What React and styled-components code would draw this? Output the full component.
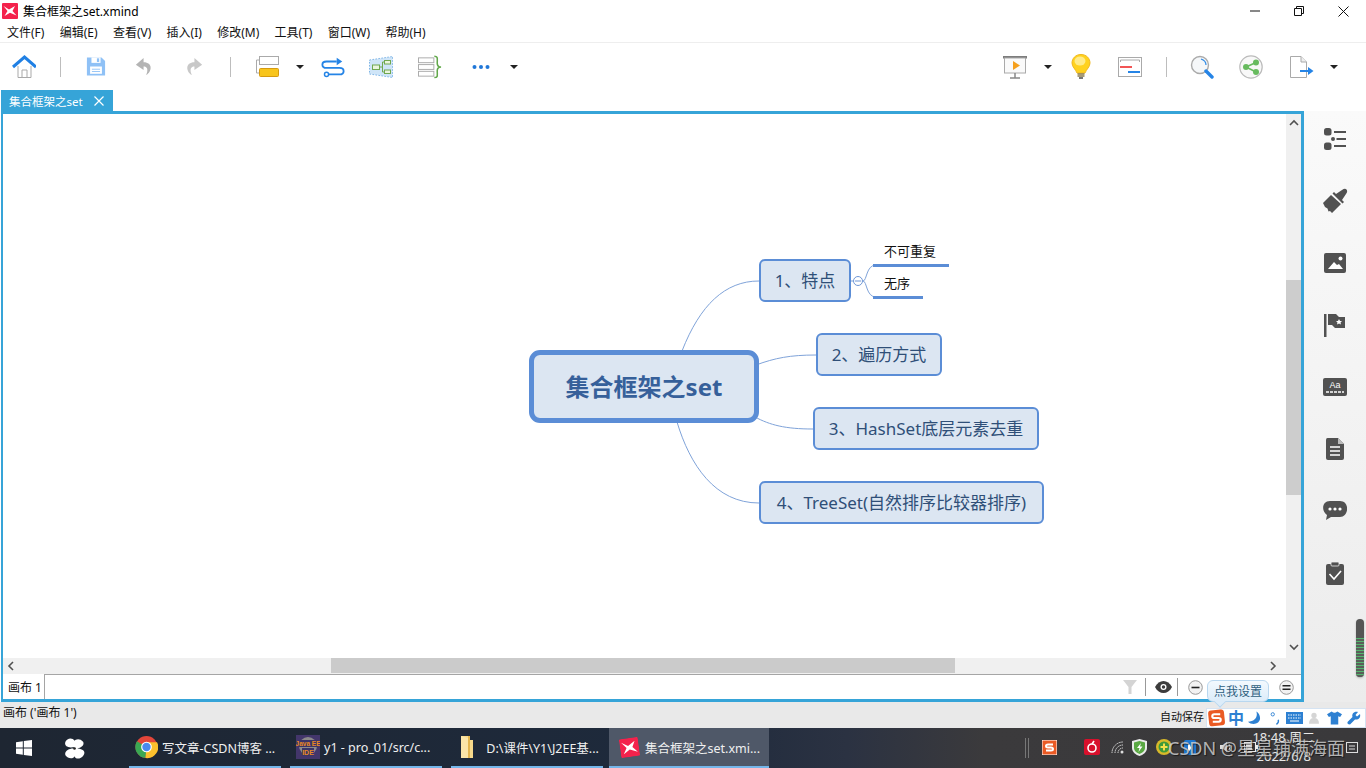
import React from 'react';
import styled, { createGlobalStyle } from 'styled-components';

const GlobalStyle = createGlobalStyle`
  html, body { margin: 0; padding: 0; background: #fff; }
  body { font-family: "Noto Sans", "Noto Sans CJK SC", sans-serif; }
  * { box-sizing: border-box; }
`;

const cjk = `"Noto Sans", "Noto Sans CJK SC", sans-serif`;

const Page = styled.div`
  position: relative;
  width: 1366px;
  height: 768px;
  overflow: hidden;
  display: flex;
  flex-direction: column;
  font-family: ${cjk};
`;

const TitleBar = styled.div`
  height: 22px;
  flex: none;
  display: flex;
  align-items: center;
  padding-left: 2px;
  color: #000;
  font-size: 12px;
`;

const TitleText = styled.span`
  margin-left: 5px;
  flex: 1;
`;

const WinButtons = styled.div`
  display: flex;
  align-items: center;
  gap: 34px;
  padding-right: 17px;
  height: 22px;
`;

const MenuBar = styled.div`
  height: 21px;
  flex: none;
  display: flex;
  align-items: center;
  gap: 15.3px;
  padding-left: 7px;
  font-size: 12px;
  color: #111;
  border-bottom: 1px solid #eee;
`;

const Toolbar = styled.div`
  height: 47px;
  flex: none;
  display: flex;
  align-items: center;
  padding-left: 12px;
`;

const Tool = styled.span`
  display: flex;
  align-items: center;
  flex: none;
  margin-left: ${p => p.$ml || 0}px;
`;

const Sep = styled.span`
  flex: none;
  width: 1px;
  height: 20px;
  background: #bdbdbd;
  margin-left: ${p => p.$ml || 0}px;
`;

const Caret = styled.span`
  flex: none;
  width: 0;
  height: 0;
  border-left: 4px solid transparent;
  border-right: 4px solid transparent;
  border-top: 4px solid #222;
  margin-left: ${p => p.$ml || 0}px;
`;

const Spacer = styled.span`
  flex: 1;
`;

const Main = styled.div`
  height: 612px;
  flex: none;
  display: flex;
`;

const LeftColumn = styled.div`
  width: 1304px;
  display: flex;
  flex-direction: column;
  padding-left: 1px;
`;

const TabRow = styled.div`
  height: 21px;
  flex: none;
  display: flex;
`;

const Tab = styled.div`
  width: 112px;
  background: #36a4d8;
  color: #fff;
  font-size: 11.5px;
  display: flex;
  align-items: center;
  justify-content: space-between;
  padding: 0 9px 0 8px;
`;

const Frame = styled.div`
  flex: 1;
  border: 3px solid #36a4d8;
  border-left-width: 2px;
  display: flex;
  flex-direction: column;
  min-height: 0;
`;

const FrameTop = styled.div`
  height: 544px;
  flex: none;
  display: flex;
`;

const Canvas = styled.div`
  position: relative;
  flex: 1;
  background: #fff;
`;

const Lines = styled.svg`
  position: absolute;
  left: 0;
  top: 0;
`;

const Node = styled.div`
  position: absolute;
  left: ${p => p.$x}px;
  top: ${p => p.$y}px;
  width: ${p => p.$w}px;
  height: 43px;
  background: #dce6f2;
  border: 2px solid #5b8dd6;
  border-radius: 6px;
  color: #2f4f78;
  font-size: 17px;
  display: flex;
  align-items: center;
  justify-content: center;
  white-space: nowrap;
  padding-bottom: 2px;
`;

const CenterNode = styled(Node)`
  height: 73px;
  border-width: 5px;
  border-radius: 11px;
  color: #36609a;
  font-size: 24px;
  font-weight: 700;
`;

const SubNode = styled.div`
  position: absolute;
  left: ${p => p.$x}px;
  top: ${p => p.$y}px;
  width: ${p => p.$w}px;
  height: 25px;
  border-bottom: 3px solid #5b8dd6;
  color: #111;
  font-size: 13px;
  line-height: 18px;
  padding-left: 11px;
  white-space: nowrap;
`;

const VScroll = styled.div`
  width: 15px;
  background: #f0f0f0;
  display: flex;
  flex-direction: column;
  align-items: center;
  justify-content: space-between;
  padding: 5px 0;
  position: relative;
`;

const VThumb = styled.div`
  position: absolute;
  left: 0;
  top: 166px;
  width: 100%;
  height: 215px;
  background: #cdcdcd;
`;

const HScroll = styled.div`
  height: 16px;
  flex: none;
  background: #f0f0f0;
  display: flex;
  align-items: center;
  justify-content: space-between;
  padding: 0 22px 0 4px;
  position: relative;
`;

const HThumb = styled.div`
  position: absolute;
  left: 328px;
  top: 0;
  width: 624px;
  height: 15px;
  background: #cbcbcb;
`;

const SheetBar = styled.div`
  flex: 1;
  display: flex;
  align-items: stretch;
  background: #fff;
`;

const SheetTab = styled.div`
  width: 42px;
  padding-left: 5px;
  font-size: 12px;
  color: #111;
  display: flex;
  align-items: center;
  border-right: 1px solid #a5a5a5;
  white-space: nowrap;
`;

const SheetTools = styled.div`
  flex: 1;
  border-top: 1px solid #a5a5a5;
  display: flex;
  align-items: center;
  justify-content: flex-end;
  padding-right: 7px;
`;

const BarSep = styled.span`
  width: 1px;
  height: 18px;
  background: #999;
  margin-left: ${p => p.$ml || 0}px;
`;

const Sidebar = styled.div`
  width: 62px;
  background: linear-gradient(#fafafa, #ececec);
  position: relative;
  display: flex;
  flex-direction: column;
  align-items: center;
  padding-top: 15px;
  gap: 36px;
  margin-top: 21px;
`;

const SideIcon = styled.span`
  display: flex;
  width: 26px;
  height: 26px;
  align-items: center;
  justify-content: center;
`;

const Level = styled.div`
  position: absolute;
  right: 2px;
  top: 508px;
  width: 8px;
  height: 58px;
  border-radius: 4px;
  background: #555;
  box-shadow: 0 1px 2px rgba(0, 0, 0, .25);
  overflow: hidden;
  display: flex;
  align-items: flex-end;
`;

const LevelFill = styled.div`
  width: 100%;
  height: 39px;
  background: repeating-linear-gradient(#55b56f 0, #55b56f 1px, #5a5f5a 1px, #5a5f5a 3px);
`;

const StatusBar = styled.div`
  height: 26px;
  flex: none;
  background: #e9e9e9;
  display: flex;
  align-items: center;
  padding-left: 3px;
  font-size: 12px;
  color: #111;
`;

const StatusLeft = styled.span`
  flex: 1;
  padding-bottom: 6px;
`;

const AutoSave = styled.span`
  padding-top: 2px;
  margin-right: 2px;
  font-size: 11px;
`;

const ImeBar = styled.div`
  width: 160px;
  height: 20px;
  margin-top: 6px;
  background: #fff;
  border: 1px solid #d5e3f2;
  display: flex;
  align-items: center;
  color: #2d80d2;
`;

const ImeGlyph = styled.span`
  flex: none;
  display: flex;
  margin-left: ${p => p.$ml || 0}px;
`;

const ImeZh = styled(ImeGlyph)`
  font-size: 16px;
  font-weight: 700;
  color: #2d80d2;
  line-height: 1;
`;

const Bubble = styled.div`
  position: absolute;
  left: 1207px;
  top: 680px;
  width: 62px;
  height: 22px;
  border: 1px solid #b9d7ef;
  border-radius: 6px;
  background: linear-gradient(#f3f9fe, #dcecf9);
  color: #2f5f80;
  font-size: 12px;
  display: flex;
  align-items: center;
  justify-content: center;
  &:after {
    content: "";
    position: absolute;
    left: 7px;
    bottom: -6px;
    width: 9px;
    height: 9px;
    background: #dcecf9;
    border-right: 1px solid #b9d7ef;
    border-bottom: 1px solid #b9d7ef;
    transform: rotate(45deg) scale(.8);
  }
`;

const Taskbar = styled.div`
  height: 40px;
  flex: none;
  background: linear-gradient(90deg, #1e2632 0%, #1e2a3c 50%, #2b3242 62%, #3b3a3c 72%, #3a393b 100%);
  display: flex;
  align-items: center;
  color: #fff;
`;

const StartArea = styled.div`
  width: 129px;
  flex: none;
  display: flex;
  align-items: center;
  padding-left: 16px;
`;

const TaskItem = styled.div`
  width: ${p => (p.$active ? 160 : 152)}px;
  height: 40px;
  flex: none;
  margin-right: ${p => (p.$active ? 0 : 9)}px;
  margin-left: ${p => (p.$active ? -3 : 0)}px;
  display: flex;
  align-items: center;
  gap: ${p => (p.$active ? 6 : 4)}px;
  padding-left: ${p => (p.$active ? 11 : 6)}px;
  font-size: 12.5px;
  color: #f0f0f0;
  white-space: nowrap;
  background: ${p => (p.$active ? '#4f5868' : 'transparent')};
  border-bottom: 2px solid #74b6ea;
`;

const Tray = styled.div`
  flex: 1;
  display: flex;
  align-items: center;
  height: 40px;
  position: relative;
`;

const TrayIcon = styled.span`
  flex: none;
  display: flex;
  margin-left: ${p => p.$ml || 0}px;
  margin-bottom: 2px;
`;

const TraySep = styled.span`
  flex: none;
  width: 4px;
  height: 20px;
  border-left: 1px solid #777;
  border-right: 1px solid #777;
  margin-left: ${p => p.$ml || 0}px;
`;

const Clock = styled.div`
  position: absolute;
  right: 51px;
  top: 0;
  text-align: center;
  font-size: 13px;
  line-height: 19px;
  color: #e8e8e8;
  white-space: nowrap;
`;

const Watermark = styled.div`
  position: absolute;
  left: 1168px;
  top: 735px;
  font-size: 18px;
  line-height: 26px;
  color: rgba(210, 210, 210, .82);
  text-shadow: 1px 1px 1px rgba(0, 0, 0, .55);
  white-space: nowrap;
`;

const XLogo = ({ size = 16, tilt = 0 }) => (
  <svg width={size} height={size} viewBox="0 0 16 16" style={{ transform: `rotate(${tilt}deg)` }}>
    <rect width="16" height="16" rx="1" fill="#f4224c" />
    <path d="M1.5 3 L7 6.5 L13 3 L10.5 8 L14.5 12.5 L8 9.8 L2.5 13 L5.5 8 Z" fill="#fff" />
  </svg>
);

const Home = () => (
  <svg width="24" height="24" viewBox="0 0 24 24">
    <path d="M6 11 V22.5 H19 V11" fill="#fff" stroke="#a9a9a9" />
    <path d="M10 22 V15 H15 V22" fill="none" stroke="#a9a9a9" />
    <path d="M1 12 L12.5 2 L24 12" fill="none" stroke="#2080e4" strokeWidth="3" />
  </svg>
);

const Save = () => (
  <svg width="20" height="21" viewBox="0 0 22 22">
    <path d="M1 1 H17 L21 5 V21 H1 Z" fill="#8fc1f6" />
    <rect x="6" y="1" width="10" height="6" fill="#fff" />
    <rect x="12" y="2" width="2.5" height="4" fill="#8fc1f6" />
    <rect x="4.5" y="11" width="13" height="8" fill="#fff" />
    <path d="M6.5 14 H15.5 M6.5 16.5 H15.5" stroke="#8fc1f6" />
  </svg>
);

const Undo = ({ flip, fill }) => (
  <svg width="18" height="21" viewBox="0 0 21 22" style={{ transform: flip ? 'scaleX(-1)' : 'none' }}>
    <path d="M10 1 L1 9 L10 15 V11 C14 11 16 14 13 21 C20 17 21 6 10 6 Z" fill={fill} />
  </svg>
);

const Topic = () => (
  <svg width="23" height="21" viewBox="0 0 23 21">
    <rect x="3.5" y=".5" width="19" height="8" fill="#fff" stroke="#aaa" />
    <path d="M3.5 4 H.5 V17 H3.5" fill="none" stroke="#aaa" />
    <rect x="3.5" y="12.5" width="19" height="8" rx="1" fill="#f8c51c" stroke="#d69a10" />
  </svg>
);

const Relation = () => (
  <svg width="24" height="22" viewBox="0 0 26 22">
    <path d="M17 5 H6 C0 5 0 12 6 12 H20 C26 12 26 19 20 19 H8" fill="none" stroke="#2584e6" strokeWidth="2" />
    <path d="M17 1 L23 5 L17 9 Z" fill="#2584e6" />
    <circle cx="6" cy="19" r="2.2" fill="#fff" stroke="#2584e6" strokeWidth="1.6" />
  </svg>
);

const Boundary = () => (
  <svg width="26" height="22" viewBox="0 0 25 22">
    <path d="M1 4 L24 .5 V21.5 L1 18 Z" fill="#cfe5f8" stroke="#7db4e6" strokeDasharray="1.5 1.5" />
    <rect x="4" y="9" width="7" height="4.5" fill="#eaf5de" stroke="#71a84f" />
    <rect x="16" y="4.5" width="6" height="3.5" fill="#eaf5de" stroke="#71a84f" />
    <rect x="16" y="14" width="6" height="3.5" fill="#eaf5de" stroke="#71a84f" />
    <path d="M11 11 H14 M14 6 V16 M14 6 H16 M14 16 H16" stroke="#71a84f" fill="none" />
  </svg>
);

const Summary = () => (
  <svg width="25" height="24" viewBox="0 0 26 24">
    <rect x=".5" y="2.5" width="16" height="5" fill="#fff" stroke="#aaa" />
    <rect x=".5" y="9.5" width="16" height="5" fill="#fff" stroke="#aaa" />
    <rect x=".5" y="16.5" width="16" height="5" fill="#fff" stroke="#aaa" />
    <path d="M17 .8 C21 .8 20 3 20 8 C20 11 21 12 24 12 C21 12 20 13 20 16 C20 21 21 23 17 23" fill="none" stroke="#62a84a" strokeWidth="1.6" />
  </svg>
);

const More = () => (
  <svg width="18" height="6" viewBox="0 0 18 6">
    <circle cx="2.5" cy="3" r="2" fill="#2077d8" />
    <circle cx="9" cy="3" r="2" fill="#2077d8" />
    <circle cx="15.5" cy="3" r="2" fill="#2077d8" />
  </svg>
);

const Present = () => (
  <svg width="25" height="24" viewBox="0 0 25 24">
    <rect x="0" y="1" width="24" height="2.5" fill="#7d7d7d" />
    <rect x="1.5" y="3" width="21" height="15" fill="#fafafa" stroke="#aaa" />
    <path d="M10 6 L17 10.5 L10 15 Z" fill="#f5a01e" />
    <path d="M12 18 V23 M7 23 H17" stroke="#888" strokeWidth="1.5" />
  </svg>
);

const Bulb = () => (
  <svg width="20" height="25" viewBox="0 0 20 25">
    <path d="M10 .5 C4.5 .5 1 4.5 1 9 C1 13 4.5 15 6 19 H14 C15.5 15 19 13 19 9 C19 4.5 15.5 .5 10 .5 Z" fill="#ffd21f" stroke="#f0b820" />
    <ellipse cx="9" cy="7" rx="5.5" ry="4.5" fill="#ffeb8a" />
    <path d="M6.5 20 H13.5 M6.5 22 H13.5" stroke="#8a7b4c" strokeWidth="1.6" />
    <path d="M8 24 H12" stroke="#555" strokeWidth="1.6" />
  </svg>
);

const Gantt = () => (
  <svg width="24" height="20" viewBox="0 0 24 20">
    <rect x=".5" y=".5" width="23" height="19" fill="#fff" stroke="#aaa" />
    <path d="M2.5 5 V3 H21.5 V5" fill="none" stroke="#aaa" />
    <rect x="2" y="9" width="12" height="2" fill="#f25555" />
    <rect x="10" y="14" width="12" height="2" fill="#2584e6" />
  </svg>
);

const Search = () => (
  <svg width="24" height="24" viewBox="0 0 24 24">
    <circle cx="10" cy="10" r="8.5" fill="#f5f7f9" stroke="#aaa" strokeWidth="1.4" />
    <path d="M11 4 C14 5 16 7 16 10" fill="none" stroke="#2e8ae6" strokeWidth="1.2" />
    <path d="M16 16 L22 22" stroke="#2584e6" strokeWidth="3.4" strokeLinecap="round" />
  </svg>
);

const Share = () => (
  <svg width="24" height="24" viewBox="0 0 24 24">
    <circle cx="12" cy="12" r="11.2" fill="#f8f8f8" stroke="#bbb" strokeWidth="1.2" />
    <path d="M17 7.5 L7 12 L17 17" fill="none" stroke="#68bb5f" strokeWidth="1.6" />
    <circle cx="17" cy="7.5" r="3" fill="#68bb5f" />
    <circle cx="7" cy="12" r="3" fill="#68bb5f" />
    <circle cx="17" cy="17" r="3" fill="#68bb5f" />
  </svg>
);

const ExportFile = () => (
  <svg width="24" height="22" viewBox="0 0 24 22">
    <path d="M.5 .5 H11 L16.5 6 V21.5 H.5 Z" fill="#fff" stroke="#aaa" />
    <path d="M11 .5 V6 H16.5" fill="#eee" stroke="#aaa" />
    <path d="M10 15 H19" stroke="#2584e6" strokeWidth="2" />
    <path d="M18 11 L23.5 15 L18 19 Z" fill="#2584e6" />
  </svg>
);

const Chevron = ({ dir }) => {
  const d = { up: 'M1 6 L5 2 L9 6', down: 'M1 2 L5 6 L9 2', left: 'M6 1 L2 5 L6 9', right: 'M2 1 L6 5 L2 9' }[dir];
  return (
    <svg width="10" height="10" viewBox="0 0 10 10" style={{ position: 'relative', zIndex: 1 }}>
      <path d={d} fill="none" stroke="#505050" strokeWidth="1.6" />
    </svg>
  );
};

const s = '#515151';
const sideIcons = [
  <svg key="a" width="22" height="22" viewBox="0 0 22 22">
    <rect width="7.5" height="7.5" rx="2.5" fill={s} /><circle cx="9" cy="11" r="2" fill={s} /><rect y="14.5" width="7.5" height="7.5" rx="2.5" fill={s} />
    <path d="M10 4 H22 M12.5 11 H22 M10 18 H22" stroke={s} strokeWidth="2" />
  </svg>,
  <svg key="b" width="26" height="26" viewBox="0 0 26 26">
    <path d="M1 15 L9 7 L19 16 L10 25 L8 23 L6.5 23.5 L5.5 20.5 L3 19 Z" fill={s} />
    <path d="M10.5 5.5 L12 4 L14 6 L20 2 Q23 0 24.5 1.5 Q26 3.5 24 6 L20 12 L22 14 L20.5 15.5 Z" fill={s} />
  </svg>,
  <svg key="c" width="22" height="20" viewBox="0 0 22 20">
    <rect width="22" height="20" rx="2" fill={s} />
    <path d="M4 16 L10 9 L13 12 L15 11 L19 16 Z" fill="#fff" /><circle cx="16.5" cy="5.5" r="2" fill="#fff" />
  </svg>,
  <svg key="d" width="22" height="23" viewBox="0 0 22 23">
    <rect x="0" y="0" width="2.5" height="23" fill={s} />
    <path d="M4 0 H12 L15 3 H21 V14 H11 L8 11 H4 Z" fill={s} />
    <path d="M15 5 L16 7 L18 7 L16.5 8.5 L17 10.5 L15 9.5 L13 10.5 L13.5 8.5 L12 7 L14 7 Z" fill="#fff" />
  </svg>,
  <svg key="e" width="24" height="18" viewBox="0 0 24 18">
    <rect width="24" height="18" rx="2" fill={s} />
    <text x="12" y="10" textAnchor="middle" fontSize="9" fontFamily="Liberation Sans" fill="#fff">Aa</text>
    <path d="M3 14 H21" stroke="#fff" strokeWidth="1.4" strokeDasharray="3 1" />
  </svg>,
  <svg key="f" width="18" height="22" viewBox="0 0 18 22">
    <path d="M1.5 0 H12 L18 6 V20 Q18 22 16 22 H2 Q0 22 0 20 V2 Q0 0 1.5 0 Z" fill={s} />
    <path d="M12 0 L18 6 H12 Z" fill="#bbb" />
    <path d="M4 9 H14 M4 13 H14 M4 17 H14" stroke="#fff" strokeWidth="1.3" />
  </svg>,
  <svg key="g" width="24" height="20" viewBox="0 0 24 20">
    <path d="M7 0 H17 C27 0 26 16 17 16 H8 L3 19 L4 14 C-2 10 -1 0 7 0 Z" fill={s} />
    <circle cx="7" cy="8" r="1.6" fill="#fff" /><circle cx="12" cy="8" r="1.6" fill="#fff" /><circle cx="17" cy="8" r="1.6" fill="#fff" />
  </svg>,
  <svg key="h" width="18" height="23" viewBox="0 0 18 23">
    <rect y="2" width="18" height="21" rx="2" fill={s} />
    <rect x="5" y="0" width="8" height="4" rx="1" fill={s} stroke="#eee" strokeWidth=".8" />
    <path d="M3.5 12 L8 17 L15 9" fill="none" stroke="#fff" strokeWidth="1.6" />
  </svg>,
];

const WinLogo = () => (
  <svg width="16" height="16" viewBox="0 0 16 16">
    <path d="M0 2.2 L6.8 1.2 V7.5 H0 Z M7.8 1 L16 0 V7.5 H7.8 Z M0 8.5 H6.8 V14.8 L0 13.8 Z M7.8 8.5 H16 V16 L7.8 15 Z" fill="#fff" />
  </svg>
);

const Pinwheel = () => (
  <svg width="21" height="21" viewBox="0 0 22 22" style={{ marginLeft: 32 }}>
    <path d="M11 9.5 C3 11 0 8 1.5 4 C3 0 9 -1 11 3 C12 1 17 0 20 4 C22 8 17 11 12.5 11 C20 11 23 14 20.5 18 C18 22 12 23 11 19 C10 22 4 22 1.5 18 C0 14 5 11 9.5 11 Z" fill="#fff" />
    <circle cx="11" cy="11" r="1.4" fill="#222" />
  </svg>
);

const Chrome = () => (
  <svg width="23" height="24" viewBox="0 0 24 24">
    <circle cx="12" cy="12" r="11.5" fill="#e3463a" />
    <path d="M12 12 L2 6 A11.5 11.5 0 0 0 11 23.5 Z" fill="#3aa853" />
    <path d="M12 7 H23 A11.5 11.5 0 0 1 11 23.5 L12 12 Z" fill="#fbc02d" />
    <circle cx="12" cy="12" r="5.6" fill="#fff" />
    <circle cx="12" cy="12" r="4.4" fill="#4a8af0" />
  </svg>
);

const EclipseIcon = () => (
  <svg width="24" height="24" viewBox="0 0 24 24">
    <rect width="24" height="24" fill="#43366b" />
    <circle cx="12" cy="11" r="9" fill="#8c8a8a" />
    <rect x="2" y="5" width="20" height="7" fill="#3b3468" />
    <rect x="6" y="13" width="12" height="8" fill="#3b3468" />
    <text x="12" y="11" textAnchor="middle" fontSize="6.5" fontWeight="700" fontFamily="Liberation Sans" fill="#e98a22">Java EE</text>
    <text x="12" y="20" textAnchor="middle" fontSize="7" fontWeight="700" fontFamily="Liberation Sans" fill="#e98a22">IDE</text>
  </svg>
);

const Folder = () => (
  <svg width="16" height="24" viewBox="0 0 16 24" style={{ marginLeft: 2, marginRight: 4 }}>
    <path d="M2 1 H11 V5 H14 V23 H2 Z" fill="#f7d98b" />
    <path d="M9 1 H11 V23 H9 Z" fill="#e4b64f" />
    <path d="M2 1 L9 3 V23 H2 Z" fill="#fbe5a8" />
  </svg>
);

const SogouS = ({ size = 15 }) => (
  <svg width={size} height={size} viewBox="0 0 15 15">
    <rect width="15" height="15" fill="#ea5a24" stroke="#fff" />
    <path d="M11 4.5 H6 Q4 4.5 4 6 T6 7.5 H9 Q11 7.5 11 9 T9 10.5 H4" fill="none" stroke="#fff" strokeWidth="2" />
  </svg>
);

const App = () => (
  <Page>
    <GlobalStyle />
    <TitleBar>
      <XLogo />
      <TitleText>集合框架之set.xmind</TitleText>
      <WinButtons>
        <svg width="10" height="10" viewBox="0 0 10 10"><path d="M0 5 H10" stroke="#111" /></svg>
        <svg width="10" height="10" viewBox="0 0 10 10"><path d="M.5 2.5 H7.5 V9.5 H.5 Z M2.5 2.5 V.5 H9.5 V7.5 H7.5" fill="none" stroke="#111" /></svg>
        <svg width="11" height="11" viewBox="0 0 11 11"><path d="M.5 .5 L10.5 10.5 M10.5 .5 L.5 10.5" stroke="#111" /></svg>
      </WinButtons>
    </TitleBar>
    <MenuBar>
      {['文件(F)', '编辑(E)', '查看(V)', '插入(I)', '修改(M)', '工具(T)', '窗口(W)', '帮助(H)'].map(m => (
        <span key={m}>{m}</span>
      ))}
    </MenuBar>
    <Toolbar>
      <Tool><Home /></Tool>
      <Sep $ml={24} />
      <Tool $ml={25}><Save /></Tool>
      <Tool $ml={29}><Undo fill="#b4b4b4" /></Tool>
      <Tool $ml={32}><Undo flip fill="#c8c8c8" /></Tool>
      <Sep $ml={27} />
      <Tool $ml={25}><Topic /></Tool>
      <Caret $ml={17} />
      <Tool $ml={17}><Relation /></Tool>
      <Tool $ml={23}><Boundary /></Tool>
      <Tool $ml={24}><Summary /></Tool>
      <Tool $ml={29}><More /></Tool>
      <Caret $ml={20} />
      <Spacer />
      <Tool><Present /></Tool>
      <Caret $ml={16} />
      <Tool $ml={19}><Bulb /></Tool>
      <Tool $ml={27}><Gantt /></Tool>
      <Sep $ml={24} />
      <Tool $ml={23}><Search /></Tool>
      <Tool $ml={25}><Share /></Tool>
      <Tool $ml={27}><ExportFile /></Tool>
      <Caret $ml={16} />
      <Tool $ml={28} />
    </Toolbar>
    <Main>
      <LeftColumn>
        <TabRow>
          <Tab>
            <span>集合框架之set</span>
            <svg width="10" height="10" viewBox="0 0 10 10"><path d="M.5 .5 L9.5 9.5 M9.5 .5 L.5 9.5" stroke="#fff" strokeWidth="1.2" /></svg>
          </Tab>
        </TabRow>
        <Frame>
          <FrameTop>
            <Canvas>
              <Lines width="1282" height="544" viewBox="3 114 1282 544">
                <g fill="none" stroke="#7fa3d9" strokeWidth="1">
                  <path d="M682 351 C700 305 725 281 759 281" />
                  <path d="M756 365 C775 358 790 355 816 355" />
                  <path d="M755 417 C770 425 785 429 813 429" />
                  <path d="M677 422 C690 465 715 503 759 503" />
                  <path d="M851 281 H853" />
                  <path d="M863 281 C867 281 866 265 876 265" />
                  <path d="M863 281 C867 281 866 297 876 297" />
                  <circle cx="858" cy="281" r="4.5" fill="#fff" stroke="#6f97d6" />
                  <path d="M855 281 H861" stroke="#6f97d6" />
                </g>
              </Lines>
              <CenterNode $x={526} $y={236} $w={230}>集合框架之set</CenterNode>
              <Node $x={756} $y={145} $w={92}>1、特点</Node>
              <Node $x={813} $y={219} $w={126}>2、遍历方式</Node>
              <Node $x={810} $y={293} $w={226}>3、HashSet底层元素去重</Node>
              <Node $x={756} $y={367} $w={285}>4、TreeSet(自然排序比较器排序)</Node>
              <SubNode $x={870} $y={128} $w={76}>不可重复</SubNode>
              <SubNode $x={870} $y={160} $w={50}>无序</SubNode>
            </Canvas>
            <VScroll>
              <VThumb />
              <Chevron dir="up" />
              <Chevron dir="down" />
            </VScroll>
          </FrameTop>
          <HScroll>
            <HThumb />
            <Chevron dir="left" />
            <Chevron dir="right" />
          </HScroll>
          <SheetBar>
            <SheetTab>画布 1</SheetTab>
            <SheetTools>
              <svg width="16" height="16" viewBox="0 0 16 16"><path d="M1 1 H15 L9.5 8 V15 H6.5 V8 Z" fill="#d4d4d4" /></svg>
              <BarSep $ml={7} />
              <svg width="17" height="12" viewBox="0 0 17 12" style={{ marginLeft: 9 }}>
                <path d="M0 6 C4 -2 13 -2 17 6 C13 14 4 14 0 6 Z" fill="#3c3c3c" />
                <circle cx="8.5" cy="6" r="3" fill="#fff" /><circle cx="8.5" cy="6" r="1.7" fill="#3c3c3c" />
              </svg>
              <BarSep $ml={5} />
              <svg width="15" height="15" viewBox="0 0 15 15" style={{ marginLeft: 10 }}>
                <circle cx="7.5" cy="7.5" r="6.8" fill="#f2f2f2" stroke="#999" /><path d="M3.5 7.5 H11.5" stroke="#222" strokeWidth="1.6" />
              </svg>
              <svg width="15" height="15" viewBox="0 0 15 15" style={{ marginLeft: 76 }}>
                <circle cx="7.5" cy="7.5" r="6.8" fill="#f2f2f2" stroke="#999" /><path d="M3.5 5.8 H11.5 M3.5 9.2 H11.5" stroke="#222" strokeWidth="1.6" />
              </svg>
            </SheetTools>
          </SheetBar>
        </Frame>
      </LeftColumn>
      <Sidebar>
        {sideIcons.map((icon, i) => <SideIcon key={i}>{icon}</SideIcon>)}
        <Level><LevelFill /></Level>
      </Sidebar>
    </Main>
    <StatusBar>
      <StatusLeft>画布 ('画布 1')</StatusLeft>
      <AutoSave>自动保存</AutoSave>
      <ImeBar>
        <ImeGlyph>
          <svg width="19" height="18" viewBox="0 0 17 17">
            <rect x="1" y="1" width="15" height="15" rx="3" fill="#ea5a24" transform="rotate(-6 8 8)" />
            <path d="M12 5 H6.5 Q4.5 5 4.5 6.8 T6.5 8.5 H10.5 Q12.5 8.5 12.5 10.2 T10.5 12 H5" fill="none" stroke="#fff" strokeWidth="2" />
          </svg>
        </ImeGlyph>
        <ImeZh $ml={2}>中</ImeZh>
        <ImeGlyph $ml={4}>
          <svg width="13" height="14" viewBox="0 0 14 14"><path d="M9 0 C11 6 7 11 0 11 C4 15 13 14 13 7 C13 4 11 1 9 0 Z" fill="#2d80d2" /></svg>
        </ImeGlyph>
        <ImeGlyph $ml={9}>
          <svg width="11" height="14" viewBox="0 0 12 14"><circle cx="3" cy="3" r="1.8" fill="none" stroke="#2d80d2" /><path d="M9 9 Q10 12 7 14" fill="none" stroke="#2d80d2" strokeWidth="1.5" /></svg>
        </ImeGlyph>
        <ImeGlyph $ml={5}>
          <svg width="17" height="12" viewBox="0 0 17 12"><rect width="17" height="12" fill="#2d80d2" /><path d="M2 3 H15 M2 6 H15" stroke="#fff" strokeDasharray="1.5 1" /><path d="M4 9 H13" stroke="#fff" /></svg>
        </ImeGlyph>
        <ImeGlyph $ml={6}>
          <svg width="10" height="14" viewBox="0 0 12 14"><circle cx="6" cy="4" r="3.2" fill="#d5d5d5" /><path d="M0 14 Q0 7 6 7 Q12 7 12 14 Z" fill="#d5d5d5" /></svg>
        </ImeGlyph>
        <ImeGlyph $ml={8}>
          <svg width="15" height="14" viewBox="0 0 16 14"><path d="M5 0 L0 3 L2 6 L4 5 V14 H12 V5 L14 6 L16 3 L11 0 Q8 3 5 0 Z" fill="#2d80d2" /></svg>
        </ImeGlyph>
        <ImeGlyph $ml={5}>
          <svg width="14" height="14" viewBox="0 0 14 14"><path d="M13 3 L10 5.5 L8.5 4 L11 1 C7 0 4.5 3 5.5 6 L0.5 11 Q0 13.5 3 13.5 L8 8.5 C11.5 9 14 6.5 13 3 Z" fill="#2d80d2" /></svg>
        </ImeGlyph>
      </ImeBar>
    </StatusBar>
    <Taskbar>
      <StartArea>
        <WinLogo />
        <Pinwheel />
      </StartArea>
      <TaskItem><Chrome />写文章-CSDN博客 ...</TaskItem>
      <TaskItem><EclipseIcon />y1 - pro_01/src/c...</TaskItem>
      <TaskItem><Folder />&nbsp;D:\课件\Y1\J2EE基...</TaskItem>
      <TaskItem $active><XLogo size={19} tilt={-8} />集合框架之set.xmi...</TaskItem>
      <Tray>
        <TraySep $ml={256} />
        <TrayIcon $ml={13}><SogouS /></TrayIcon>
        <TrayIcon $ml={27}>
          <svg width="16" height="16" viewBox="0 0 16 16"><rect width="16" height="16" rx="2" fill="#d8102c" /><circle cx="8" cy="9" r="4" fill="none" stroke="#fff" strokeWidth="1.6" /><path d="M10 2 L8 5" stroke="#fff" strokeWidth="1.6" /></svg>
        </TrayIcon>
        <TrayIcon $ml={11}>
          <svg width="13" height="13" viewBox="0 0 13 13"><path d="M1 12 A11 11 0 0 1 12 1 M4 12 A8 8 0 0 1 12 4 M7 12 A5 5 0 0 1 12 7" fill="none" stroke="#ddd" strokeDasharray="1.5 .7" /><circle cx="11" cy="11" r="1.5" fill="#ddd" /></svg>
        </TrayIcon>
        <TrayIcon $ml={8}>
          <svg width="15" height="17" viewBox="0 0 15 17"><path d="M7.5 0 L15 2 V9 C15 13 11 16 7.5 17 C4 16 0 13 0 9 V2 Z" fill="#eaeaea" /><path d="M7.5 2 L13 3.5 V9 C13 12 10 14 7.5 15 C5 14 2 12 2 9 V3.5 Z" fill="#5aa843" /><path d="M9 4 L5 9 H7.5 L6.5 13 L10.5 7.5 H8 Z" fill="#fff" /></svg>
        </TrayIcon>
        <TrayIcon $ml={9}>
          <svg width="16" height="16" viewBox="0 0 16 16"><circle cx="8" cy="8" r="8" fill="#d8b92a" /><circle cx="8" cy="8" r="5.5" fill="#3f9a3a" /><path d="M8 4.5 V11.5 M4.5 8 H11.5" stroke="#f4e04a" strokeWidth="2" /></svg>
        </TrayIcon>
        <TrayIcon $ml={12}>
          <svg width="12" height="15" viewBox="0 0 12 15"><rect width="12" height="15" rx="2" fill="#1f78d1" /><path d="M4 3 Q10 7.5 4 12 Z" fill="#fff" /></svg>
        </TrayIcon>
        <TrayIcon $ml={24}>
          <svg width="12" height="12" viewBox="0 0 12 12"><path d="M0 4 H3 L7 1 V11 L3 8 H0 Z" fill="#ddd" /><path d="M9 3 Q11 6 9 9" stroke="#ddd" fill="none" /></svg>
        </TrayIcon>
        <TrayIcon $ml={12}>
          <svg width="14" height="10" viewBox="0 0 14 10"><rect x=".5" y=".5" width="11" height="9" fill="none" stroke="#eee" /><rect x="2" y="2" width="6" height="6" fill="#eee" /><rect x="12" y="3" width="2" height="4" fill="#eee" /></svg>
        </TrayIcon>
        <TrayIcon $ml={88}>
          <svg width="12" height="11" viewBox="0 0 12 11"><rect x=".5" y=".5" width="11" height="10" fill="none" stroke="#ddd" /><path d="M3 4 H9 M3 7 H9" stroke="#ddd" /></svg>
        </TrayIcon>
        <Clock>18:48 周二<br />2022/6/8</Clock>
      </Tray>
    </Taskbar>
    <Bubble>点我设置</Bubble>
    <Watermark>CSDN @星星铺满海面</Watermark>
  </Page>
);

export default App;
